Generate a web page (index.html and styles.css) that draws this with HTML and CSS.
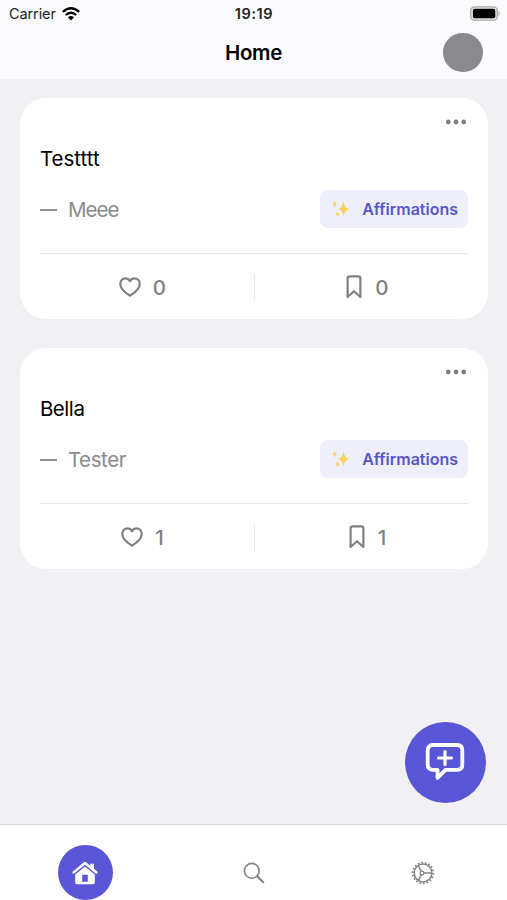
FILE: index.html
```html
<!DOCTYPE html>
<html lang="en">
<head>
<meta charset="utf-8">
<meta name="viewport" content="width=device-width, initial-scale=1">
<title>Home</title>
<link rel="stylesheet" href="styles.css">
</head>
<body>
<svg class="defs" aria-hidden="true">
  <symbol id="heart" viewBox="0 0 22 20"><path d="M11 18.700C8 16.800 1.300 12.600 1.300 6.900C1.300 3.600 3.600 1.300 6.400 1.300C8.500 1.300 10.100 2.500 11 4.200C11.900 2.500 13.500 1.300 15.600 1.300C18.400 1.300 20.700 3.600 20.700 6.900C20.700 12.600 14 16.800 11 18.700Z" fill="none" stroke="currentColor" stroke-width="2.200" stroke-linejoin="round"/></symbol>
  <symbol id="bookmark" viewBox="0 0 16 24"><path d="M1.600 22V3.500Q1.600 1.300 3.700 1.300H12.300Q14.400 1.300 14.400 3.500V22L8 16.200Z" fill="none" stroke="currentColor" stroke-width="2.200" stroke-linejoin="round"/></symbol>
  <symbol id="dots" viewBox="0 0 22 6"><g fill="currentColor"><circle cx="3.300" cy="3" r="2.400"/><circle cx="11" cy="3" r="2.400"/><circle cx="18.700" cy="3" r="2.400"/></g></symbol>
  <symbol id="sparkles" viewBox="0 0 18 18"><g fill="#fbd25c"><path d="M11.500 1Q12.300 8.100 17.500 9Q12.300 9.900 11.500 17Q10.700 9.900 5.500 9Q10.700 8.100 11.500 1Z"/><path d="M2.700 .8Q3.100 3.600 5 4.300Q3.100 5 2.700 7.800Q2.300 5 .4 4.300Q2.300 3.600 2.700 .8Z"/><path d="M5.500 11Q5.900 13.700 8 14.300Q5.900 14.900 5.500 17.500Q5.100 14.900 3.200 14.300Q5.100 13.700 5.500 11Z"/></g></symbol>
</svg>
<div class="app">
  <header class="header">
    <div class="status">
      <div class="carrier"><span>Carrier</span>
        <svg width="18" height="14" viewBox="0 0 18 14"><g fill="none" stroke="#000" stroke-width="2.300"><path d="M.8 4.800Q9-2.400 17.200 4.800"/><path d="M3.700 8Q9 3.400 14.300 8"/></g><path d="M5.900 10.200Q9 7.600 12.100 10.200L9 13.500Z"/></svg>
      </div>
      <div class="time">19:19</div>
      <svg class="battery" width="31" height="15" viewBox="0 0 31 15"><rect x=".7" y=".8" width="26.600" height="13.400" rx="4" fill="#e6e6e8" stroke="#aaaaac" stroke-width="1.300"/><rect x="2.900" y="2.800" width="22.400" height="9.400" rx="2"/><path d="M28.600 5Q31 7.500 28.600 10Z" fill="#aaaaac"/></svg>
    </div>
    <div class="titlebar"><span></span><h1 class="title">Home</h1><div class="avatar"></div></div>
  </header>
  <main class="feed">
    <article class="card">
      <div class="more"><svg width="22" height="6"><use href="#dots"/></svg></div>
      <div class="quote wide">Testttt</div>
      <div class="meta">
        <div class="author"><i class="dash"></i><span class="tight">Meee</span></div>
        <div class="tag"><svg width="18" height="18"><use href="#sparkles"/></svg><span>Affirmations</span></div>
      </div>
      <div class="actions">
        <div class="action"><svg width="22" height="20"><use href="#heart"/></svg><span>0</span></div>
        <div class="action"><svg width="16" height="24"><use href="#bookmark"/></svg><span>0</span></div>
      </div>
    </article>
    <article class="card">
      <div class="more"><svg width="22" height="6"><use href="#dots"/></svg></div>
      <div class="quote">Bella</div>
      <div class="meta">
        <div class="author"><i class="dash"></i><span>Tester</span></div>
        <div class="tag"><svg width="18" height="18"><use href="#sparkles"/></svg><span>Affirmations</span></div>
      </div>
      <div class="actions">
        <div class="action"><svg width="22" height="20"><use href="#heart"/></svg><span>1</span></div>
        <div class="action"><svg width="16" height="24"><use href="#bookmark"/></svg><span>1</span></div>
      </div>
    </article>
  </main>
  <div class="fab"><svg width="40" height="38" viewBox="0 0 40 38"><g fill="none" stroke="#fff" stroke-linecap="round" stroke-linejoin="round"><path d="M8 2H32Q37.300 2 37.300 7.300V21.500Q37.300 26.800 32 26.800H20.500L12.500 34.800V26.800H8Q2.700 26.800 2.700 21.500V7.300Q2.700 2 8 2Z" stroke-width="3.800"/><path d="M20 8.500V21.500M13.500 15H26.500" stroke-width="3.200"/></g></svg></div>
  <nav class="tabs">
    <div class="tab"><div class="home"><svg width="26" height="24" viewBox="0 0 26 24"><path d="M18.300 2.700H21.900V9.500L18.300 6.500Z" fill="#fff"/><path fill="#fff" fill-rule="evenodd" d="M13 5.600L22.800 13.600V21.500Q22.800 23.300 21 23.300H5Q3.200 23.300 3.200 21.500V13.600ZM10.200 13.800V20.800H15.800V13.800Z"/><path d="M2 13.300L13 4.200L24 13.300" fill="none" stroke="#5856d6" stroke-width="1.100"/><path d="M1.600 11.500L13 2L24.400 11.500" fill="none" stroke="#fff" stroke-width="2.400" stroke-linecap="round" stroke-linejoin="round"/></svg></div></div>
    <div class="tab"><svg width="22" height="22" viewBox="0 0 22 22" fill="none" stroke="#858585" stroke-linecap="round"><circle cx="8.800" cy="8.800" r="7.400" stroke-width="1.600"/><path d="M14.400 14.400L20.300 20.300" stroke-width="2.100"/></svg></div>
    <div class="tab"><svg width="24" height="24" viewBox="0 0 24 24" fill="none" stroke="#858585"><circle cx="12" cy="12" r="8.900" stroke-width="1.500"/><circle cx="12" cy="12" r="10.400" stroke-width="1.600" pathLength="72" stroke-dasharray="2 2"/><circle cx="11" cy="12" r="1.900" stroke-width="1.200"/><path d="M13 12H20.500M10.300 10.300L7.300 4.700M10.300 13.700L7.300 19.300" stroke-width="1.500"/></svg></div>
  </nav>
</div>
</body>
</html>
```
FILE: styles.css
```css
* { box-sizing: border-box; }
body { margin: 0; font-family: Inter, "Liberation Sans", sans-serif; color: #000; background: #f0f0f5; }
svg { display: block; flex: none; }
.defs { position: absolute; width: 0; height: 0; }
.app { position: relative; height: 900px; display: flex; flex-direction: column; overflow: hidden; }
.header { height: 79px; background: #fbfbfd; flex: none; }
.status { height: 27px; padding: 0 6px 0 9px; display: grid; grid-template-columns: 1fr auto 1fr; align-items: center; }
.carrier { display: flex; align-items: center; gap: 6px; font-size: 14.5px; letter-spacing: -.1px; color: #222; }
.time { font-size: 14.5px; font-weight: 600; letter-spacing: .6px; margin-right: 2px; color: #222; }
.battery { justify-self: end; }
.titlebar { height: 50.5px; padding: 0 24.5px; display: grid; grid-template-columns: 1fr auto 1fr; align-items: center; }
.title { margin: 0; font-size: 20.5px; font-weight: 600; letter-spacing: -.3px; }
.avatar { width: 39.5px; height: 39.5px; border-radius: 50%; background: #8a8a8e; justify-self: end; }
.feed { flex: 1; padding: 19.4px 19.5px 0 20.4px; display: flex; flex-direction: column; gap: 29px; }
.card { height: 221px; padding: 0 19.5px; border-radius: 26px; background: #fff; }
.more { height: 47px; padding-right: 1.5px; display: flex; align-items: center; justify-content: flex-end; color: #808080; }
.quote { margin-top: 2px; height: 24px; line-height: 24px; font-size: 20.5px; letter-spacing: -.45px; }
.wide { letter-spacing: 0; }
.meta { margin-top: 19px; height: 38px; display: flex; align-items: center; justify-content: space-between; }
.author { display: flex; align-items: center; gap: 11px; margin-top: 1px; font-size: 20.5px; letter-spacing: -.4px; color: #8a8a8a; }
.tight { letter-spacing: -.9px; }
.dash { width: 17px; height: 2px; margin-top: 1px; background: #929292; }
.tag { width: 148.5px; height: 38px; padding: 0 10px 0 12px; border-radius: 8px; background: #efeffc; display: flex; align-items: center; justify-content: space-between; color: #5856c8; font-size: 16px; font-weight: 600; }
.actions { margin-top: 25px; border-top: 1px solid #e5e5e7; height: 67px; display: grid; grid-template-columns: 1fr 1fr; align-items: center; }
.action { height: 27px; padding-right: 9px; display: flex; align-items: center; justify-content: center; gap: 12px; color: #808080; font-size: 20.5px; font-weight: 500; }
.action + .action { padding: 0 0 0 12px; gap: 13px; border-left: 1px solid #e8e8ea; }
.fab { position: absolute; left: 404.5px; top: 721.5px; width: 81px; height: 81px; border-radius: 50%; background: #5856d6; display: flex; align-items: center; justify-content: center; }
.tabs { flex: none; height: 76px; border-top: 1px solid #d8d8dc; background: #fff; display: grid; grid-template-columns: repeat(3, 1fr); }
.tab { height: 95px; display: flex; align-items: center; justify-content: center; }
.home { width: 55px; height: 55px; margin-left: 1px; border-radius: 50%; background: #5856d6; display: flex; align-items: center; justify-content: center; }
```
